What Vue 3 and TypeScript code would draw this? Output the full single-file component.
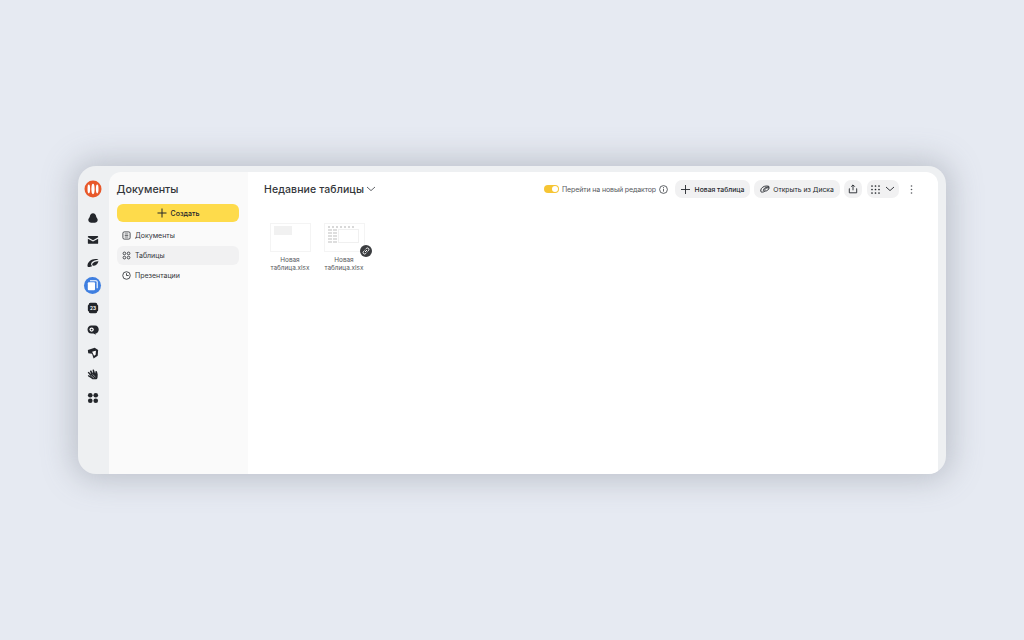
<script setup lang="ts">
const navItems = [
  { label: 'Документы', icon: 'doc' },
  { label: 'Таблицы', icon: 'grid', active: true },
  { label: 'Презентации', icon: 'clock' },
]
const files = [
  { name: 'Новая таблица.xlsx', kind: 'plain' },
  { name: 'Новая таблица.xlsx', kind: 'table', shared: true },
]
const headCells = Array.from({ length: 7 }, (_, i) => i)
const sideCells = Array.from({ length: 10 }, (_, i) => i)
</script>

<template>
  <div class="page">
    <div class="window">
      <aside class="rail">
        <div class="logo">
          <svg width="18" height="18" viewBox="0 0 18 18">
            <circle cx="9" cy="9" r="8.500" fill="#e8582a" />
            <ellipse cx="9" cy="9" rx="1.600" ry="5.200" fill="#fff" />
            <ellipse cx="4.800" cy="9" rx="1.300" ry="4.400" fill="#fff" />
            <ellipse cx="13.200" cy="9" rx="1.300" ry="4.400" fill="#fff" />
          </svg>
        </div>
        <!-- диск -->
        <svg class="rail-icon" viewBox="0 0 14 14">
          <path d="M7 1.600c2.200 0 3.300 1.800 3.800 3.800.3 1.300 1.700 2 1.700 3.900 0 2.500-2.300 3.300-5.500 3.300s-5.500-.8-5.500-3.300c0-1.900 1.400-2.600 1.700-3.900C3.700 3.400 4.800 1.600 7 1.600z" fill="#23262b" />
        </svg>
        <!-- почта -->
        <svg class="rail-icon" viewBox="0 0 14 14">
          <path d="M1.800 2.200h10.400c.5 0 .8.300.8.800v.9L7 7.200 1 3.900V3c0-.5.300-.8.800-.8z" fill="#23262b" />
          <path d="M1 5.500l6 3.300 6-3.300v5.200c0 .5-.3.800-.8.800H1.800c-.5 0-.8-.3-.8-.8z" fill="#23262b" />
        </svg>
        <!-- заметки -->
        <svg class="rail-icon" viewBox="0 0 14 14">
          <path d="M.6 9.200C1.200 5.600 5 2.400 9.600 2.300c2.100 0 3.600.5 3.900 1.400-3.300-.5-7.800 1.400-8.600 4-.4 1.400.2 2.300 1.200 2.700-1.900 1.300-4.300 1.900-5.200.9-.4-.5-.4-1.300-.3-2.100z" fill="#23262b" />
          <path d="M6.200 8c.7-1.800 3.900-3.300 7.200-3.100-.5 3.200-3.500 5.600-6.200 5.400-1-.1-1.400-1.200-1-2.300z" fill="#23262b" />
        </svg>
        <!-- документы, активный -->
        <div class="rail-active">
          <svg width="11" height="11" viewBox="0 0 11 11">
            <rect x="0.800" y="2.300" width="7.200" height="8" rx="1" fill="#fff" />
            <path d="M3 .8h6c.7 0 1.200.5 1.200 1.200v6.200" fill="none" stroke="#fff" stroke-width="1.100" />
          </svg>
        </div>
        <!-- календарь -->
        <svg class="rail-icon" viewBox="0 0 14 14">
          <rect x="2" y="1" width="10" height="12" rx="2" fill="#23262b" />
          <rect x="1" y="3.500" width="12" height="7" rx="1" fill="#23262b" />
          <text x="7" y="9.100" text-anchor="middle" class="cal-text">23</text>
        </svg>
        <!-- телемост -->
        <svg class="rail-icon" viewBox="0 0 14 14">
          <path d="M5 1.800h4.500c2.500 0 4.200 2.100 4.200 4.700 0 2.500-1.600 4.500-3.900 4.700l.6 1.200-2.900-1.200H5c-2.600 0-4.400-2-4.400-4.700S2.400 1.800 5 1.800z" fill="#23262b" />
          <circle cx="5.400" cy="6.500" r="2.500" fill="#fff" />
          <circle cx="5.400" cy="6.500" r="1.100" fill="#23262b" />
        </svg>
        <!-- трекер -->
        <svg class="rail-icon" viewBox="0 0 14 14">
          <path d="M1 3.600L9 1l4 2.600-.5 6.600-4.800 3.300-1.800-5.500L1.400 7.200z" fill="#23262b" />
          <path d="M6 5.400l4-1 .4.300-.3 4.200-1.900 1.300z" fill="#fff" />
        </svg>
        <!-- формы -->
        <svg class="rail-icon" viewBox="0 0 14 14">
          <path d="M.8 4.200L2 3.300l2.900 2.900L3.300 2.400l1.400-.8 2.400 3.600-.6-4.300 1.500-.3 1.500 4.600.5-2.800 1.600.2.900 3.800-.2 3.400c-.1 1.400-1.100 2.300-2.500 2.300h-2c-1 0-1.800-.4-2.500-1.100L.8 8.100l1-1.100 2.700 1.800z" fill="#23262b" />
          <path d="M4.500 7.400l3.800 3.400M6.400 6.300l3.500 3.200" stroke="#eef0f2" stroke-width=".6" fill="none" />
        </svg>
        <!-- все сервисы -->
        <svg class="rail-icon" viewBox="0 0 14 14">
          <circle cx="3.800" cy="3.800" r="2.700" fill="#23262b" />
          <circle cx="10.200" cy="3.800" r="2.700" fill="#23262b" />
          <circle cx="3.800" cy="10.200" r="2.700" fill="#23262b" />
          <circle cx="10.200" cy="10.200" r="2.700" fill="#23262b" />
        </svg>
      </aside>

      <nav class="side">
        <h1 class="side-title">Документы</h1>
        <button class="create">
          <svg width="10" height="10" viewBox="0 0 10 10">
            <path d="M5 .5v9M.5 5h9" stroke="#23262b" stroke-width="1" />
          </svg>
          Создать
        </button>
        <ul class="nav-list">
          <li v-for="item in navItems" :key="item.label" class="nav-item" :class="{ active: item.active }">
            <svg width="9" height="9" viewBox="0 0 10 10" fill="none" stroke="#3a3d42" stroke-width="1">
              <template v-if="item.icon === 'doc'">
                <rect x="1" y="1" width="8" height="8" rx="1.500" />
                <path d="M3 3.300h4M3 5h4M3 6.700h4" stroke-width=".8" />
              </template>
              <template v-else-if="item.icon === 'grid'">
                <circle cx="2.700" cy="2.700" r="1.500" />
                <circle cx="7.300" cy="2.700" r="1.500" />
                <circle cx="2.700" cy="7.300" r="1.500" />
                <circle cx="7.300" cy="7.300" r="1.500" />
              </template>
              <template v-else>
                <circle cx="5" cy="5" r="4.200" />
                <path d="M5 2.500V5h2.400" />
              </template>
            </svg>
            <span>{{ item.label }}</span>
          </li>
        </ul>
      </nav>

      <main class="main">
        <header class="toolbar">
          <div class="heading">
            <h2>Недавние таблицы</h2>
            <svg width="10" height="6" viewBox="0 0 10 6" fill="none" stroke="#3a3d42" stroke-width=".8">
              <path d="M1 1l4 3.600L9 1" />
            </svg>
          </div>
          <div class="actions">
            <div class="switch"><span class="knob"></span></div>
            <span class="switch-label">Перейти на новый редактор</span>
            <svg class="info" width="9" height="9" viewBox="0 0 9 9" fill="none" stroke="#3a3d42" stroke-width=".8">
              <circle cx="4.500" cy="4.500" r="3.900" />
              <path d="M4.500 3.800v2.800M4.500 2.100v1" />
            </svg>
            <button class="btn btn-new">
              <svg width="9" height="9" viewBox="0 0 9 9">
                <path d="M4.500 0v9M0 4.500h9" stroke="#23262b" stroke-width=".9" />
              </svg>
              Новая таблица
            </button>
            <button class="btn btn-disk">
              <svg width="10" height="8" viewBox="0 0 10 8" fill="none" stroke="#23262b" stroke-width=".9">
                <path d="M.8 5C1.200 2.800 3.600 1 6.500 1c1.300 0 2.300.3 2.700.8C7 1.700 4 2.900 3.500 4.600 3.200 5.700 3.800 6.300 4.500 6.500 3 7.200 1.600 7.300 1 6.800.7 6.500.7 5.800.8 5z" />
                <path d="M4.800 4.500c.5-1.100 2.500-1.900 4.400-1.800-.3 1.900-2.200 3.400-3.800 3.300-.6-.1-.9-.8-.6-1.500z" />
              </svg>
              Открыть из Диска
            </button>
            <button class="btn btn-icon">
              <svg width="10" height="10" viewBox="0 0 10 10" fill="none" stroke="#23262b" stroke-width=".9">
                <path d="M5 6.300V1M3.200 2.700L5 .9l1.800 1.800" />
                <path d="M1.800 4.700h-.5v4.100h7.400V4.700h-.5" />
              </svg>
            </button>
            <button class="btn btn-view">
              <svg width="9" height="9" viewBox="0 0 9 9" fill="#23262b">
                <template v-for="x in [1, 4.500, 8]" :key="x">
                  <circle v-for="y in [1, 4.500, 8]" :key="y" :cx="x" :cy="y" r=".85" />
                </template>
              </svg>
              <svg width="10" height="6" viewBox="0 0 10 6" fill="none" stroke="#23262b" stroke-width=".9">
                <path d="M1 1l4 3.600L9 1" />
              </svg>
            </button>
            <svg class="more" width="3" height="9" viewBox="0 0 3 9" fill="#55585c">
              <circle cx="1.500" cy="1" r=".8" />
              <circle cx="1.500" cy="4.500" r=".8" />
              <circle cx="1.500" cy="8" r=".8" />
            </svg>
          </div>
        </header>

        <section class="files">
          <div v-for="(file, i) in files" :key="i" class="file">
            <div class="thumb">
              <div v-if="file.kind === 'plain'" class="thumb-plain"></div>
              <div v-else class="thumb-table">
                <div class="sheet-head">
                  <i v-for="c in headCells" :key="c"></i>
                </div>
                <div class="sheet-body">
                  <div class="sheet-side">
                    <i v-for="c in sideCells" :key="c"></i>
                  </div>
                  <div class="sheet-cols"></div>
                </div>
              </div>
              <div v-if="file.shared" class="badge">
                <svg width="8" height="8" viewBox="0 0 8 8" fill="none" stroke="#fff" stroke-width="1">
                  <path d="M3.400 2.400l1-1c.6-.6 1.500-.6 2.100 0s.6 1.500 0 2.100l-1 1" />
                  <path d="M4.600 5.600l-1 1c-.6.6-1.500.6-2.100 0s-.6-1.500 0-2.100l1-1" />
                  <path d="M3 5l2-2" />
                </svg>
              </div>
            </div>
            <div class="file-name">{{ file.name }}</div>
          </div>
        </section>
      </main>
    </div>
  </div>
</template>

<style>
body {
  background: #e6eaf2;
}
</style>

<style scoped>
.page {
  width: 1024px;
  height: 640px;
  display: flex;
  align-items: center;
  justify-content: center;
  font-family: Inter, "Liberation Sans", sans-serif;
  color: #23262b;
  overflow: hidden;
}

.window {
  width: 868px;
  height: 308px;
  box-sizing: border-box;
  padding: 6px 8px 0 0;
  display: flex;
  background: #eef0f2;
  border-radius: 18px;
  box-shadow: 0 0 30px 6px rgba(110, 118, 130, 0.34);
  overflow: hidden;
}

.rail {
  width: 31px;
  flex: none;
  box-sizing: border-box;
  display: flex;
  flex-direction: column;
  align-items: center;
  padding: 8px 2px 0 0;
  gap: 10.500px;
}

.logo {
  height: 18px;
  margin-bottom: 3px;
}

.rail-icon {
  width: 12px;
  height: 12px;
}

.rail-active {
  width: 17px;
  height: 17px;
  margin: -2.500px 0;
  border-radius: 50%;
  background: #3f7fe0;
  display: flex;
  align-items: center;
  justify-content: center;
}

.cal-text {
  font-size: 5.500px;
  font-weight: 700;
  fill: #fff;
}

.side {
  width: 139px;
  flex: none;
  box-sizing: border-box;
  padding: 10px 9px 0 8px;
  background: #fafafa;
  border-radius: 12px 0 0 0;
}

.side-title {
  margin: 0 0 0 -0.500px;
  font-size: 10.700px;
  line-height: 15px;
  font-weight: 500;
  color: #33363a;
}

.create {
  width: 100%;
  height: 18px;
  margin-top: 7px;
  border: none;
  border-radius: 6px;
  background: #fedb4b;
  display: flex;
  align-items: center;
  justify-content: center;
  gap: 4px;
  font: 500 7px Inter, "Liberation Sans", sans-serif;
  color: #23262b;
  padding: 0;
}

.nav-list {
  list-style: none;
  margin: 4px 0 0;
  padding: 0;
  display: flex;
  flex-direction: column;
  gap: 1px;
}

.nav-item {
  height: 19px;
  padding-left: 4.500px;
  display: flex;
  align-items: center;
  gap: 4.500px;
  border-radius: 6px;
  font-size: 7px;
  font-weight: 400;
  color: #33363a;
}

.nav-item.active {
  background: #f1f1f2;
}

.main {
  flex: 1;
  min-width: 0;
  background: #fff;
  border-radius: 0 12px 0 0;
}

.toolbar {
  height: 34px;
  padding: 0 25px 0 16px;
  display: flex;
  align-items: center;
  justify-content: space-between;
}

.heading {
  display: flex;
  align-items: center;
  gap: 1.500px;
}

.heading h2 {
  margin: 0;
  font-size: 10.500px;
  font-weight: 500;
  letter-spacing: 0.1px;
  color: #33363a;
}

.actions {
  display: flex;
  align-items: center;
}

.switch {
  width: 15px;
  height: 8px;
  border-radius: 4px;
  background: #f6c534;
  position: relative;
}

.knob {
  position: absolute;
  right: 1px;
  top: 1px;
  width: 6px;
  height: 6px;
  border-radius: 50%;
  background: #fff;
}

.switch-label {
  margin-left: 3px;
  font-size: 7px;
  color: #55585c;
  letter-spacing: -0.12px;
}

.info {
  margin-left: 3px;
}

.btn {
  height: 18px;
  padding: 0;
  border: none;
  border-radius: 7px;
  background: #f1f1f2;
  display: flex;
  align-items: center;
  justify-content: center;
  font: 500 6.800px Inter, "Liberation Sans", sans-serif;
  color: #23262b;
}

.btn-new {
  width: 75px;
  margin-left: 7px;
  gap: 5px;
}

.btn-disk {
  width: 86px;
  margin-left: 4px;
  gap: 3px;
  font-weight: 400;
}

.btn-icon {
  width: 18px;
  margin-left: 4px;
}

.btn-view {
  width: 32px;
  margin-left: 5px;
  gap: 5px;
}

.more {
  margin-left: 11px;
}

.files {
  margin: 17px 0 0 22px;
  display: flex;
  gap: 14px;
}

.file {
  width: 40px;
  display: flex;
  flex-direction: column;
  align-items: center;
}

.thumb {
  width: 41px;
  height: 29px;
  box-sizing: border-box;
  border: 1px solid #f4f4f4;
  position: relative;
  flex: none;
}

.thumb-plain {
  width: 18px;
  height: 9px;
  margin: 2px 0 0 3px;
  background: #f1f1f1;
}

.thumb-table {
  margin: 2px 0 0 3px;
  width: 31px;
}

.sheet-head {
  display: flex;
  gap: 2px;
}

.sheet-head i {
  width: 2px;
  height: 2px;
  background: #d8d8d8;
}

.sheet-body {
  display: flex;
  height: 18px;
  margin-top: 1px;
}

.sheet-side {
  width: 10px;
  display: grid;
  grid-template-columns: repeat(2, 4px);
  grid-auto-rows: 2px;
  gap: 1px;
  align-content: start;
}

.sheet-side i {
  background: #dedede;
}

.sheet-cols {
  flex: 1;
  height: 12px;
  border: 1px solid #f0f0f0;
}

.badge {
  position: absolute;
  right: -8px;
  bottom: -6px;
  width: 12px;
  height: 12px;
  border-radius: 50%;
  background: #3b3d40;
  display: flex;
  align-items: center;
  justify-content: center;
}

.file-name {
  margin-top: 5px;
  width: 44px;
  text-align: center;
  font-size: 6.400px;
  line-height: 7.500px;
  color: #55585c;
}
</style>
